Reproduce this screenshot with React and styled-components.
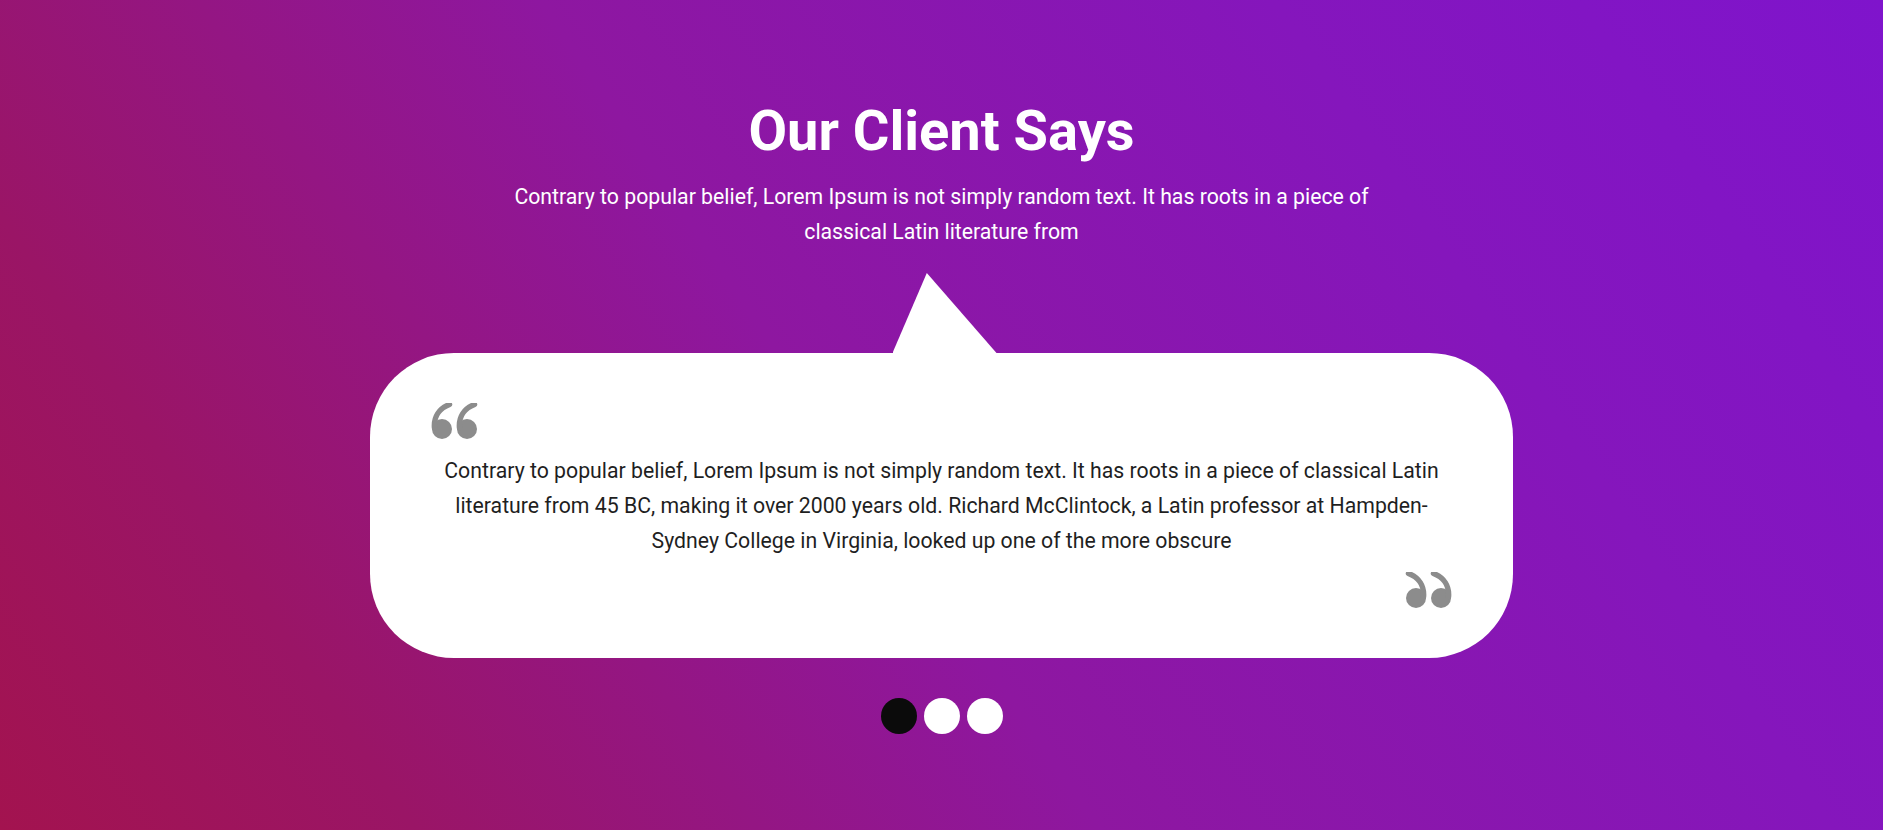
import React from 'react';
import styled, { createGlobalStyle } from 'styled-components';

const GlobalStyle = createGlobalStyle`
  html, body {
    margin: 0;
    padding: 0;
  }

  body {
    font-family: Roboto, "Liberation Sans", Arial, sans-serif;
  }
`;

const Section = styled.section`
  box-sizing: border-box;
  min-height: 100vh;
  padding-top: 98px;
  display: flex;
  flex-direction: column;
  align-items: center;

  background: linear-gradient(
    56deg,
    #a3134f 0%,
    #9a1566 17%,
    #8e17a0 45%,
    #8516bc 75%,
    #7f14cc 100%
  );
`;

const Title = styled.h2`
  margin: 0;
  color: #fff;
  font-size: 56px;
  line-height: 66px;
  font-weight: 700;
`;

const Lead = styled.p`
  margin: 15px 0 0;
  max-width: 890px;
  color: #fff;
  font-size: 21.25px;
  line-height: 35px;
  text-align: center;
`;

const Tail = styled.div`
  margin-top: 24px;
  width: 104px;
  height: 80px;
  background: #fff;
  clip-path: polygon(33% 0, 0 100%, 100% 100%);
  transform: translateX(3px);
`;

const Card = styled.div`
  box-sizing: border-box;
  width: 1143px;
  padding: 50px 61px 49px;
  background: #fff;
  border-radius: 84px;
  display: flex;
  flex-direction: column;
`;

const QuoteMark = styled.svg`
  display: block;
  width: 47px;
  height: 37px;
  fill: #8c8c8c;
  align-self: ${(p) => (p.$closing ? 'flex-end' : 'flex-start')};
  margin: ${(p) => (p.$closing ? '14px 0 0' : '0 0 13px')};
  transform: ${(p) => (p.$closing ? 'scaleX(-1)' : 'none')};
`;

const Quote = styled.p`
  margin: 0;
  color: #1f1f1f;
  font-size: 21.25px;
  line-height: 35px;
  text-align: center;
`;

const Dots = styled.div`
  display: flex;
  gap: 7px;
  margin-top: 40px;
`;

const Dot = styled.button`
  width: 36px;
  height: 36px;
  padding: 0;
  border: none;
  border-radius: 50%;
  background: ${(p) => (p.$active ? '#0b0b0b' : '#fff')};
  cursor: pointer;
`;

// one "6" shaped comma, used twice side by side
const Comma = ({ x }) => (
  <g transform={`translate(${x} 0)`}>
    <circle cx="11" cy="26" r="10" />
    <path
      d="M3.5 25 C2.5 14 8 5.5 18.5 1.5"
      fill="none"
      stroke="#8c8c8c"
      strokeWidth="5.5"
      strokeLinecap="round"
    />
  </g>
);

const QuoteIcon = ({ closing }) => (
  <QuoteMark $closing={closing} viewBox="0 0 47 37">
    <Comma x={0} />
    <Comma x={25} />
  </QuoteMark>
);

const App = () => (
  <Section>
    <GlobalStyle />
    <Title>Our Client Says</Title>
    <Lead>
      Contrary to popular belief, Lorem Ipsum is not simply random text. It
      has roots in a piece of classical Latin literature from
    </Lead>
    <Tail />
    <Card>
      <QuoteIcon />
      <Quote>
        Contrary to popular belief, Lorem Ipsum is not simply random text. It
        has roots in a piece of classical Latin literature from 45 BC, making it
        over 2000 years old. Richard McClintock, a Latin professor at
        Hampden-Sydney College in Virginia, looked up one of the more obscure
      </Quote>
      <QuoteIcon closing />
    </Card>
    <Dots>
      <Dot $active aria-label="Slide 1" />
      <Dot aria-label="Slide 2" />
      <Dot aria-label="Slide 3" />
    </Dots>
  </Section>
);

export default App;
